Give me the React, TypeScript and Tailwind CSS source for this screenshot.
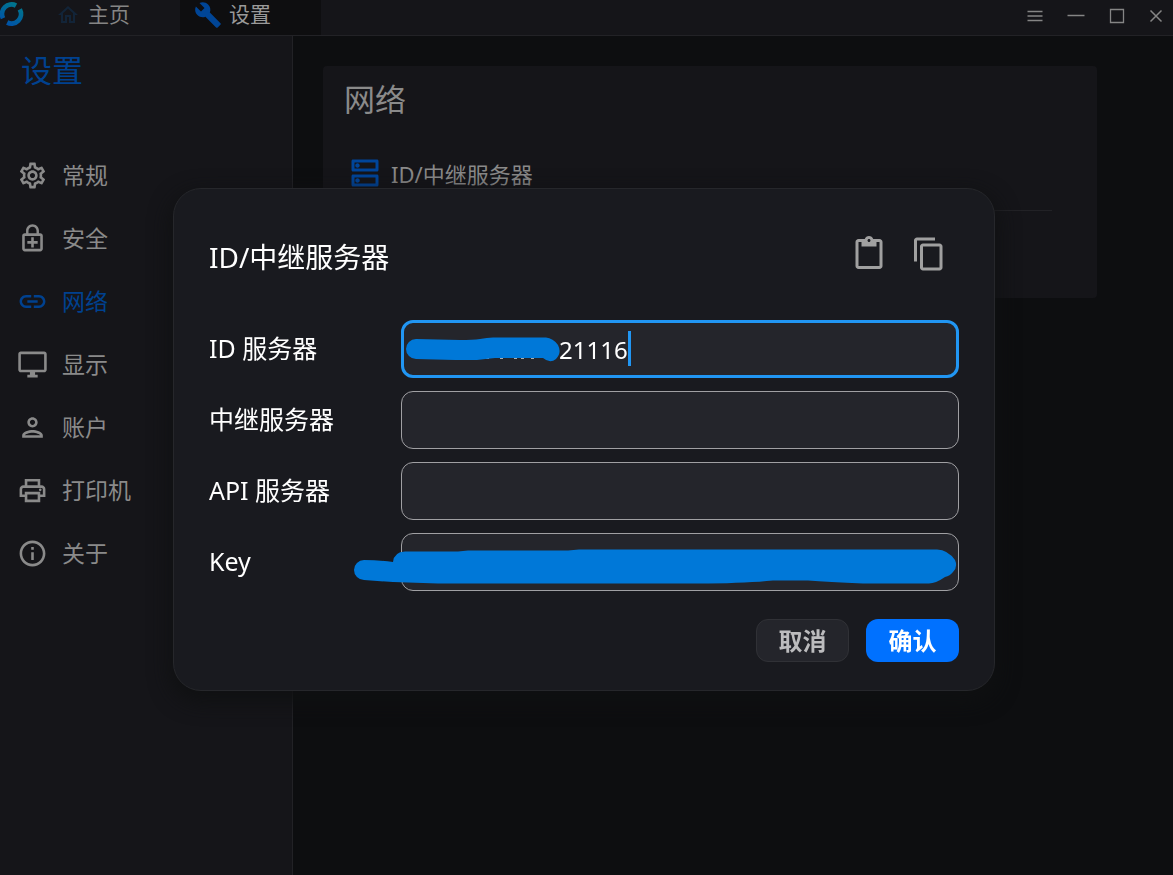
import React from "react";
import {
  MdOutlineHome,
  MdBuild,
  MdOutlineSettings,
  MdOutlineEnhancedEncryption,
  MdLink,
  MdOutlineDesktopWindows,
  MdOutlinePerson,
  MdOutlinePrint,
  MdInfoOutline,
  MdOutlineDns,
  MdOutlineContentPaste,
  MdContentCopy,
} from "react-icons/md";

const navItems = [
  { label: "常规", Icon: MdOutlineSettings },
  { label: "安全", Icon: MdOutlineEnhancedEncryption },
  { label: "网络", Icon: MdLink, active: true },
  { label: "显示", Icon: MdOutlineDesktopWindows },
  { label: "账户", Icon: MdOutlinePerson },
  { label: "打印机", Icon: MdOutlinePrint },
  { label: "关于", Icon: MdInfoOutline },
];

function Logo() {
  return (
    <svg width="24" height="28" viewBox="0 0 24 28" fill="none" aria-hidden="true">
      <defs>
        <linearGradient id="ring" x1="18" y1="3" x2="6" y2="25" gradientUnits="userSpaceOnUse">
          <stop stopColor="#00788a" />
          <stop offset="1" stopColor="#0050a8" />
        </linearGradient>
      </defs>
      <path d="M16 5.600A9.500 9.500 0 0 0 3 18.200" stroke="url(#ring)" strokeWidth="4.800" />
      <path d="M19.800 9.400A9.500 9.500 0 0 1 7.200 22.500" stroke="url(#ring)" strokeWidth="4.800" />
    </svg>
  );
}

function TitleBar() {
  return (
    <header className="flex h-9 items-stretch justify-between border-b border-[#222226] bg-[#151519] text-[21px] text-[#858585]">
      <div className="flex">
        <div className="flex w-[180px] items-start">
          <Logo />
          <a href="#home" className="ml-8 flex h-[30px] items-center gap-2">
            <MdOutlineHome className="size-6 text-[#122438]" />
            主页
          </a>
        </div>
        <a href="#settings" className="flex w-[141px] items-start bg-[#0e0e10] pl-[14px] text-[#9a9a9a]">
          <span className="flex h-[30px] items-center gap-[7px]">
            <MdBuild className="size-7 text-[#004596]" />
            设置
          </span>
        </a>
      </div>
      <div className="flex h-[31px] items-center gap-6 pr-[10px] text-[#858585]">
        <button aria-label="菜单">
          <svg width="16" height="16" viewBox="0 0 16 16" stroke="currentColor" strokeWidth="1.300"><path d="M0.500 3.500h15M0.500 8h15M0.500 12.500h15" /></svg>
        </button>
        <button aria-label="最小化">
          <svg width="18" height="16" viewBox="0 0 18 16" stroke="currentColor" strokeWidth="1.500"><path d="M0.500 7.500h17" /></svg>
        </button>
        <button aria-label="最大化">
          <svg width="16" height="16" viewBox="0 0 16 16" fill="none" stroke="currentColor" strokeWidth="1.300"><path d="M1.500 1.500h13v13h-13z" /></svg>
        </button>
        <button aria-label="关闭">
          <svg width="14" height="14" viewBox="0 0 14 14" stroke="currentColor" strokeWidth="1.500"><path d="M1.500 1.500l11 11M12.500 1.500l-11 11" /></svg>
        </button>
      </div>
    </header>
  );
}

function Sidebar() {
  return (
    <aside className="w-[293px] shrink-0 border-r border-[#222226] bg-[#151519]">
      <h1 className="px-[21px] pt-[11px] text-[31px] leading-[46px] text-[#00418f]">设置</h1>
      <nav className="mt-[51px] flex flex-col">
        {navItems.map(({ label, Icon, active }) => (
          <a
            key={label}
            href={"#" + label}
            className={
              active
                ? "flex h-[63px] items-center gap-[14px] pl-[17px] text-[23px] text-[#00418f]"
                : "flex h-[63px] items-center gap-[14px] pl-[17px] text-[23px] text-[#8a8a8a]"
            }
          >
            <Icon className="size-[31px]" />
            {label}
          </a>
        ))}
      </nav>
    </aside>
  );
}

function NetworkCard() {
  return (
    <main className="min-w-0 grow bg-[#0d0e10] pt-[30px] pr-[76px] pl-[30px]">
      <section className="h-[232px] rounded bg-[#151519] px-[21px] pt-[11px] text-[#8a8a8a]">
        <h2 className="text-[31px] leading-[44px]">网络</h2>
        <div className="mt-[18px] mr-6 flex h-[72px] items-start gap-2 border-b border-[#222226] pt-4 pl-[3px] text-[22px] leading-[38px]">
          <MdOutlineDns className="size-9 text-[#00459a]" />
          ID/中继服务器
        </div>
      </section>
    </main>
  );
}

function IdScribble() {
  return (
    <svg className="pointer-events-none absolute top-4 left-1" width="156" height="28" viewBox="0 0 156 28" aria-hidden="true">
      <path d="M81 22h3M95 22h3M109 22h3M116 22h3M126 22h3" stroke="#d5dae0" strokeWidth="1.300" />
      <path d="M11 3L55 4Q68 4 75 3Q82 1.500 88 1.500H141Q148 2 153 9Q157 17 151 23Q145 28 138 22H90Q80 23 72 24H50L11 23A10 10 0 0 1 11 3Z" fill="#0078d8" />
    </svg>
  );
}

function KeyScribble() {
  return (
    <svg className="pointer-events-none absolute top-[15px] -left-12" width="604" height="37" viewBox="0 0 604 37" aria-hidden="true">
      <path d="M11 12Q26 12 40 14Q41 4 52 3.500H105L115 2.500H215L226 1.500H584Q595 2 602 12Q605 19 600 24Q597 28 592 29Q582 36 575 35.500H510Q475 34 455 32.500H420Q395 35 355 35.500H85L40 34L11 32A10 10 0 0 1 11 12Z" fill="#0078d8" />
    </svg>
  );
}

const inputClass =
  "block h-[58px] w-full rounded-xl border border-[#a0a0a3] bg-[#24252b] px-4 text-2xl text-white outline-none";

function ServerDialog() {
  return (
    <div className="fixed inset-0 flex items-center justify-center pt-1 pr-[5px]">
      <form
        role="dialog"
        aria-labelledby="dialog-title"
        className="w-[822px] max-w-full rounded-[28px] border border-[#26272b] bg-[#191a1f] px-[35px] pt-[35px] pb-7 text-white shadow-[0_8px_20px_4px_rgba(16,17,18,0.9)]"
      >
        <div className="flex h-[66px] items-start justify-between pr-[12px]">
          <h2 id="dialog-title" className="text-[28px] leading-[66px]">ID/中继服务器</h2>
          <div className="flex gap-6 pt-3 text-[#a0a0a0]">
            <button type="button" aria-label="粘贴"><MdOutlineContentPaste className="size-9" /></button>
            <button type="button" aria-label="复制"><MdContentCopy className="size-9" /></button>
          </div>
        </div>
        <div className="mt-[30px] grid grid-cols-[192px_1fr] items-center gap-y-[13px] text-[25px]">
          <label htmlFor="id-server">ID 服务器</label>
          <div className="relative">
            <input
              id="id-server"
              defaultValue="21116"
              className="block h-[58px] w-full rounded-xl border-3 border-[#2196f3] bg-[#24252b] pr-4 pl-[155px] text-2xl text-white outline-none"
            />
            <IdScribble />
            <span className="absolute top-[11px] left-[227px] h-[35px] w-[3px] bg-[#2196f3]" />
          </div>
          <label htmlFor="relay-server">中继服务器</label>
          <input id="relay-server" className={inputClass} />
          <label htmlFor="api-server">API 服务器</label>
          <input id="api-server" className={inputClass} />
          <label htmlFor="key">Key</label>
          <div className="relative">
            <input id="key" className={inputClass} />
            <KeyScribble />
          </div>
        </div>
        <div className="mt-7 flex justify-end gap-[17px] text-2xl font-bold">
          <button type="button" className="h-[43px] w-[93px] rounded-xl border border-[#303136] bg-[#24252b] text-[#bcbcbe]">取消</button>
          <button type="submit" className="h-[43px] w-[93px] rounded-xl bg-[#0071ff] text-white">确认</button>
        </div>
      </form>
    </div>
  );
}

export default function App() {
  return (
    <div className="flex min-h-screen flex-col bg-[#0d0e10] font-['Noto_Sans','Noto_Sans_CJK_SC',sans-serif]">
      <TitleBar />
      <div className="flex grow">
        <Sidebar />
        <NetworkCard />
      </div>
      <ServerDialog />
    </div>
  );
}
